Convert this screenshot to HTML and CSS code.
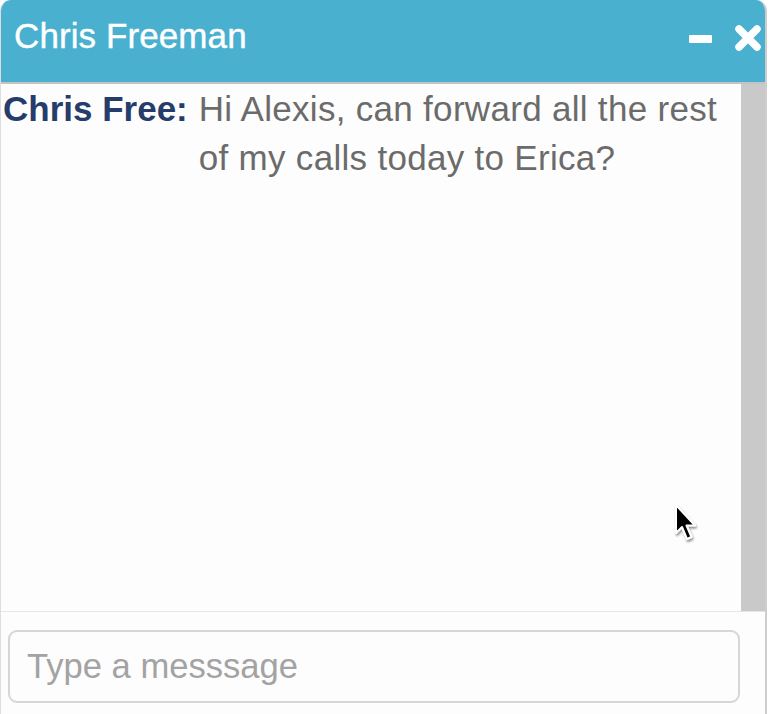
FILE: index.html
```html
<!DOCTYPE html>
<html>
<head>
<meta charset="utf-8">
<title>Chat</title>
<link rel="stylesheet" href="styles.css">
</head>
<body>
<div class="chat">
  <div class="header">
    <div class="title">Chris Freeman</div>
    <div class="actions">
      <svg class="icon-min" width="23" height="8" viewBox="0 0 23 8"><rect x="0" y="0" width="23" height="8" rx="1" fill="#fff"/></svg>
      <svg class="icon-close" width="28" height="26" viewBox="0 0 28 26"><path d="M5 4 L23 22 M23 4 L5 22" stroke="#fff" stroke-width="7.5" stroke-linecap="round"/></svg>
    </div>
  </div>
  <div class="body">
    <div class="messages">
      <div class="msg">
        <span class="name">Chris Free:</span>
        <span class="text">Hi Alexis, can forward all the rest of my calls today to Erica?</span>
      </div>
    </div>
    <div class="scrollbar"></div>
  </div>
  <div class="footer">
    <input class="input" type="text" placeholder="Type a messsage">
  </div>
</div>
<svg class="cursor" width="30" height="44" viewBox="0 0 30 44">
  <defs>
    <filter id="sh" x="-30%" y="-30%" width="160%" height="160%">
      <feGaussianBlur in="SourceAlpha" stdDeviation="1.2"/>
      <feOffset dx="0.5" dy="1.5"/>
      <feComponentTransfer><feFuncA type="linear" slope="0.45"/></feComponentTransfer>
      <feMerge><feMergeNode/><feMergeNode in="SourceGraphic"/></feMerge>
    </filter>
  </defs>
  <path filter="url(#sh)" d="M4 3 L4 31 L10 25 L15 37 L19.5 35 L14.5 23.5 L23 23.5 Z" fill="#000" stroke="#fff" stroke-width="2" stroke-linejoin="round"/>
</svg>
</body>
</html>
```
FILE: styles.css
```css
html, body {
  margin: 0;
  padding: 0;
  background: #ffffff;
}
body {
  font-family: "Liberation Sans", Arial, Helvetica, sans-serif;
  width: 769px;
  height: 714px;
  overflow: hidden;
  position: relative;
}
.chat {
  width: 764px;
  height: 714px;
  border-left: 1px solid #dedede;
  border-right: 2px solid #cdcdcd;
  border-radius: 11px 11px 0 0;
  overflow: hidden;
  display: flex;
  flex-direction: column;
  background: #fdfdfd;
}
.header {
  height: 82px;
  flex: none;
  background: #49b0cf;
  border-bottom: 2px solid #c4c4c4;
  display: flex;
  align-items: center;
  padding: 0 3px 0 13px;
}
.title {
  color: #ffffff;
  font-size: 35px;
  line-height: 35px;
  margin-bottom: 12px;
  letter-spacing: 0.1px;
  -webkit-text-stroke: 0.4px #ffffff;
}
.actions {
  margin-left: auto;
  display: flex;
  align-items: center;
  gap: 22px;
  margin-bottom: 7px;
}
.icon-min { display: block; margin-top: 2px; }
.icon-close { display: block; }
.body {
  flex: none;
  height: 527px;
  display: flex;
}
.messages {
  flex: 1;
  padding: 0 10px 0 2px;
}
.msg {
  display: flex;
  font-size: 35px;
  line-height: 49px;
}
.name {
  color: #263d6c;
  font-weight: bold;
  white-space: nowrap;
  margin-right: 11px;
}
.text {
  color: #6b6b6b;
  letter-spacing: 0.3px;
}
.scrollbar {
  width: 24px;
  background: #c9c9c9;
}
.footer {
  flex: 1;
  border-top: 1px solid #e6e6e6;
  padding: 18px 25px 0 7px;
}
.input {
  display: block;
  box-sizing: border-box;
  width: 732px;
  height: 73px;
  border: 2px solid #d6d6d6;
  border-radius: 9px;
  background: #fdfdfd;
  padding: 0 17px;
  font-family: "Liberation Sans", Arial, Helvetica, sans-serif;
  font-size: 34.6px;
  color: #555;
  outline: none;
}
.input::placeholder {
  color: #a3a3a3;
}
.cursor {
  position: absolute;
  left: 672px;
  top: 502px;
}
```
